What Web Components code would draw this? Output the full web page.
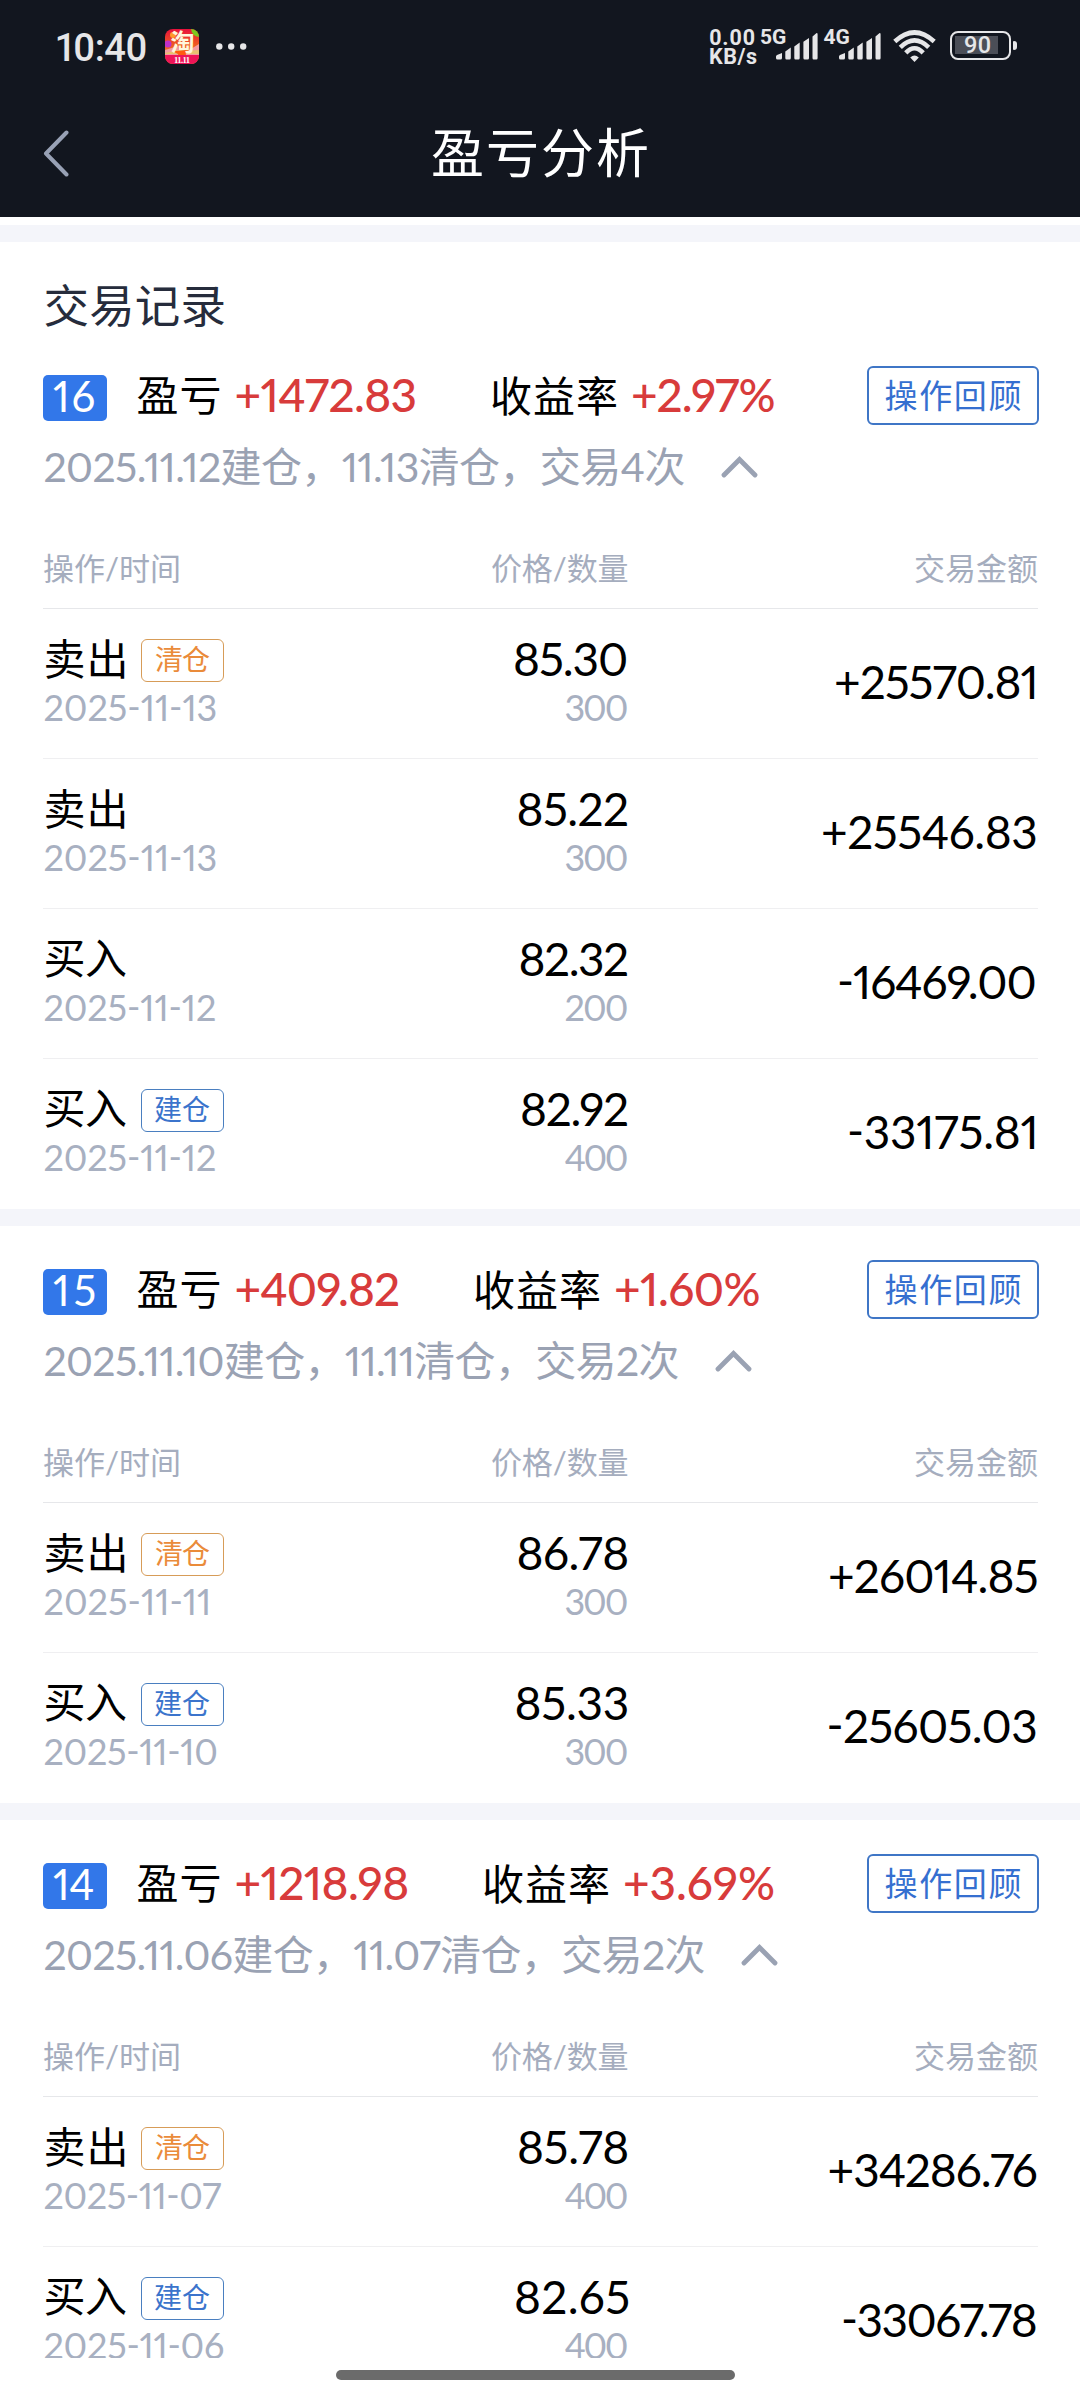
<!DOCTYPE html>
<html lang="zh-CN">
<head>
<meta charset="utf-8">
<title>盈亏分析</title>
<style>
html,body{margin:0;padding:0;background:#fff}
body{width:1080px;height:2400px;overflow:hidden;font-family:Lato,"Noto Sans CJK SC",sans-serif;font-size:46px;color:#000}
</style>
</head>
<body>
<app-screen></app-screen>
<script>
const define=(name,html,setup)=>{
  const t=document.createElement('template');t.innerHTML=html;
  customElements.define(name,class extends HTMLElement{
    connectedCallback(){
      if(this.shadowRoot)return;
      this.attachShadow({mode:'open'}).append(t.content.cloneNode(true));
      if(setup)setup(this,this.shadowRoot);
    }
  });
};
const ctx=document.createElement('canvas').getContext('2d');

/* A line of text whose box is its ink box: w is the ink width. */
define('fit-text',`<style>
:host{display:flow-root;flex:none}
span{display:block;width:max-content;white-space:nowrap;line-height:1;font-feature-settings:"pnum","lnum","case";font-kerning:normal}
</style><span></span>`,(el,root)=>{
  const s=root.querySelector('span'),txt=el.getAttribute('t'),w=+el.getAttribute('w');
  s.textContent=txt;
  const cs=getComputedStyle(el);
  ctx.font=`${cs.fontWeight} ${cs.fontSize} ${cs.fontFamily}`;
  const chars=[...txt],a=ctx.measureText(chars[0]),z=ctx.measureText(chars[chars.length-1]),m=ctx.measureText(txt);
  const left=-a.actualBoundingBoxLeft,right=z.width-z.actualBoundingBoxRight;
  const adv=s.getBoundingClientRect().width;
  s.style.letterSpacing=(w+left+right-adv)/(chars.length-1)+'px';
  s.style.marginLeft=-left+'px';
  const base=parseFloat(cs.fontSize)/2+(m.fontBoundingBoxAscent-m.fontBoundingBoxDescent)/2;
  s.style.marginTop=m.actualBoundingBoxAscent-base+'px';
  el.style.width=w+'px';
  el.style.height=m.actualBoundingBoxAscent+m.actualBoundingBoxDescent+'px';
});

define('signal-bars',`<style>:host{display:block;flex:none;width:42px;height:27px}svg{display:block}</style>
<svg width="42" height="27" viewBox="0 0 42 27" fill="#e6e6e8"><path d="M0 23.5Q0 22.5 1 22L6 20V25Q6 26.500 4.500 26.500H1.500Q0 26.500 0 25ZM9.300 18.500L14.800 14.500V25Q14.800 26.500 13.500 26.500H10.500Q9.300 26.500 9.300 25ZM18.300 13.500L23.700 9.500V25Q23.700 26.500 22.500 26.500H19.500Q18.300 26.500 18.300 25ZM27.400 8.800L33 5V25Q33 26.500 31.700 26.500H28.700Q27.400 26.500 27.400 25ZM36.500 3.600L40.300 .2Q41.600 -.3 41.600 1.500V25Q41.600 26.500 40.400 26.500H37.700Q36.500 26.500 36.500 25Z"/></svg>`);

define('status-bar',`<style>
:host{display:flex;height:92px;align-items:flex-start;color:#e6e6e8;font-family:Roboto,"Noto Sans CJK SC",sans-serif;font-weight:700}
svg{display:block;flex:none}
.time{margin:33px 0 0 59px;font-size:38px;font-weight:500}
.app{margin:29px 0 0 19px;overflow:visible}
.dots{margin:42px 0 0 16px}
.net{margin:29.500px 0 0 auto;display:grid;row-gap:3px;font-size:21.500px}
.g{margin-top:29.500px;font-size:21px}
.g5{margin-left:4px}.g4{margin-left:6px}
signal-bars{margin:33px 0 0 -10.500px}
.wifi{margin:30px 0 0 12px}
.bat{box-sizing:border-box;width:61px;height:29px;border:2.500px solid #e6e6e8;border-radius:8px;margin:31px 0 0 14px;padding:3px;display:flex}
.fill{width:43px;height:18px;background:#4b4e57;display:flex;align-items:center;padding-left:10px;box-sizing:border-box;font-size:23.500px;font-weight:500}
.nub{width:4px;height:9px;border-radius:1px 3px 3px 1px;background:#e6e6e8;margin:41px 63px 0 2px}
</style>
<fit-text class="time" t="10:40" w="87"></fit-text>
<svg class="app" width="34" height="35" viewBox="0 0 34 35"><defs><linearGradient id="g" x1="0" y1="0" x2="0" y2="1"><stop offset="0" stop-color="#e8103c"/><stop offset=".45" stop-color="#ee5a20"/><stop offset="1" stop-color="#f08a30"/></linearGradient><clipPath id="c"><rect width="34" height="35" rx="8"/></clipPath></defs><g clip-path="url(#c)"><rect width="34" height="35" fill="url(#g)"/><path d="M26 0H34V8Q27 7 26 0Z" fill="#7cc81c"/><circle cx="3" cy="15" r="3.500" fill="#c030c8"/><circle cx="8" cy="6" r="3" fill="#ff9a2a"/><path d="M0 21L13 17V27H0ZM34 15L21 23V27H34Z" fill="#f49aa0"/><path d="M0 24L14 21L20 22L34 21V25H0Z" fill="#e8c070"/><path d="M7 22L27 22L17 27Z" fill="#ff5a10"/><rect y="26" width="34" height="9" fill="#ee1458"/></g><text x="17.500" y="22" text-anchor="middle" font-family="Noto Sans CJK SC" font-weight="700" font-size="24" fill="#fff6dc">淘</text><text x="17" y="33.500" text-anchor="middle" font-family="Liberation Serif" font-weight="700" font-size="8.500" textLength="16" fill="#fff">11.11</text></svg>
<svg class="dots" width="32" height="10" fill="#e6e6e8"><circle cx="4.300" cy="4.500" r="3.200"/><circle cx="16.200" cy="4.500" r="3.200"/><circle cx="28.200" cy="4.500" r="3.200"/></svg>
<div class="net"><fit-text t="0.00" w="45"></fit-text><fit-text t="KB/s" w="47"></fit-text></div>
<fit-text class="g g5" t="5G" w="25"></fit-text><signal-bars></signal-bars>
<fit-text class="g g4" t="4G" w="26"></fit-text><signal-bars></signal-bars>
<svg class="wifi" width="43" height="33" viewBox="0 0 43 33" fill="none" stroke="#e6e6e8" stroke-width="4.600"><path d="M1.800 11.500Q21.500 -6.500 41.200 11.500"/><path d="M7.300 17.300Q21.500 3.500 35.700 17.300"/><path d="M12.800 22.800Q21.500 13.800 30.200 22.800"/><path d="M17.200 27.600Q21.500 23.200 25.800 27.600L21.500 32Z" fill="#e6e6e8" stroke="none"/></svg>
<div class="bat"><div class="fill"><fit-text t="90" w="26"></fit-text></div></div><div class="nub"></div>`);

define('nav-bar',`<style>
:host{display:flex;height:125px;align-items:flex-start;color:#fff}
svg{display:block;margin:38px 0 0 43px}
fit-text{margin:35px 0 0 362px;font-size:53px}
</style><svg width="27" height="48" fill="none" stroke="#98a1b5" stroke-width="4" stroke-linecap="round" stroke-linejoin="round"><path d="M23.500 2.500L3 23.500L23.500 44.500"/></svg><fit-text t="盈亏分析" w="215"></fit-text>`);

/* row: operation | tag | date | ink width | price | w | quantity | w | amount | w */
customElements.define('trade-row',class extends HTMLElement{
  connectedCallback(){
    if(this.shadowRoot)return;
    const [op,tag,date,dw,price,pw,qty,qw,amt,aw]=this.getAttribute('row').split('|');
    this.attachShadow({mode:'open'}).innerHTML=`<style>
:host{box-sizing:border-box;height:150px;border-bottom:1px solid #efeff1;display:grid;grid-template-columns:292px 292.500px 1fr}
:host(:last-of-type){border-bottom-color:transparent}
.cell{display:flex;flex-direction:column}
.mid,.end{align-items:flex-end}
.op{height:43px;margin-top:30px;display:flex;align-items:flex-start;justify-content:space-between;width:181px;padding-left:2.500px;box-sizing:border-box}
.op fit-text{font-size:42px}
.sub{font-size:36px;color:#a8b0c1;margin-top:13px}
.left .sub{margin-left:1.500px}
.mid .price{height:34px;margin-top:34px}
.mid .sub{margin-top:18.500px}
.end{justify-content:flex-end;padding:0 2px 58.500px 0}
.tag{box-sizing:border-box;display:flex;justify-content:center;width:83px;height:43px;padding-top:5px;border:1.500px solid #d79c58;border-radius:6px;color:#ea8b3a}
.tag fit-text{font-size:28px}
.tag.b{border-color:#4a7fc0;color:#3b74cc}
</style>
<div class="cell left"><div class="op"><fit-text t="${op}" w="${op==='卖出'?79:80.500}"></fit-text>${tag?`<div class="tag ${tag==='建仓'?'b':''}"><fit-text t="${tag}" w="55"></fit-text></div>`:''}</div><fit-text class="sub" t="${date}" w="${dw}"></fit-text></div>
<div class="cell mid"><fit-text class="price" t="${price}" w="${pw}"></fit-text><fit-text class="sub" t="${qty}" w="${qw}"></fit-text></div>
<div class="cell end"><fit-text t="${amt}" w="${aw}"></fit-text></div>`;
  }
});

/* head: number | ink width | profit | w | rate | w | summary | w */
customElements.define('profit-group',class extends HTMLElement{
  connectedCallback(){
    if(this.shadowRoot)return;
    const [no,nw,pl,plw,rate,rw,sub,sw]=this.getAttribute('head').split('|');
    this.attachShadow({mode:'open'}).innerHTML=`<style>
:host{display:block;border-top:17px solid #f4f5fa;padding:0 42px 0 43px}
.head{display:flex;height:59px;margin-top:34px;align-items:flex-start}
.no{box-sizing:border-box;width:64px;height:46px;padding-bottom:3px;margin:9px 30.500px 0 0;border-radius:5px;background:#3277e9;color:#fff;display:flex;align-items:center;justify-content:center;font-size:42px}
.lab{font-size:42px;margin-top:11px}
.rate{margin-top:8.500px}
.val{color:#d83b3b;font-weight:500;margin:13px 76.500px 0 17px}
.lab,.val{flex:none}
.btn{box-sizing:border-box;width:172px;height:59px;margin:0 -1px 0 auto;border:2px solid #3f76c6;border-radius:6px;color:#356fd0;font-size:33px;display:flex;align-items:center;justify-content:center}
.sub{display:flex;height:108.500px;margin:20.500px 0 0 1.500px;color:#9aa2b3;font-size:41px;align-items:flex-start}
.sub svg{margin:10px 0 0 36px}
.cols{box-sizing:border-box;height:55px;border-bottom:1px solid #e6e7ea;display:grid;grid-template-columns:292px 292.500px 1fr;color:#a5adbe;font-size:31px}
.cols fit-text{margin-top:-1px}
.cols fit-text:first-child{margin-left:1px}
.cols fit-text:not(:first-child){justify-self:end}
</style><slot name="title"></slot>
<div class="head"><div class="no"><fit-text t="${no}" w="${nw}"></fit-text></div>
<fit-text class="lab" t="盈亏" w="82"></fit-text><fit-text class="val" t="${pl}" w="${plw}"></fit-text>
<fit-text class="lab rate" t="收益率" w="124"></fit-text><fit-text class="val" t="${rate}" w="${rw}"></fit-text>
<div class="btn"><fit-text t="操作回顾" w="135"></fit-text></div></div>
<div class="sub"><fit-text t="${sub}" w="${sw}"></fit-text><svg width="38" height="22" fill="none" stroke="#9aa2b3" stroke-width="4.800" stroke-linecap="round"><path d="M3 19L18.500 3.500L34 19"/></svg></div>
<div class="cols"><fit-text t="操作/时间" w="135"></fit-text><fit-text t="价格/数量" w="135.500"></fit-text><fit-text t="交易金额" w="123"></fit-text></div>
<slot></slot>`;
  }
});

define('section-title',`<style>:host{display:block;height:49px;padding:41px 0 0 2.500px;color:#262c3c;font-size:45.500px}</style><fit-text t="交易记录" w="179"></fit-text>`);

define('app-screen',`<style>
:host{display:flex;flex-direction:column;width:1080px;height:2400px;background:#fff}
.dark{background:#12161f;height:217px;flex:none}
main{height:2133px;padding-top:8px;overflow:hidden;flex:none}
.home{width:399px;height:10px;border-radius:5px;background:#6b6b6b;margin:12px auto 0 336px}
</style>
<div class="dark"><status-bar></status-bar><nav-bar></nav-bar></div>
<main>
<profit-group head="16|38|+1472.83|179|+2.97%|141.5|2025.11.12建仓，11.13清仓，交易4次|640">
<section-title slot="title"></section-title>
<trade-row row="卖出|清仓|2025-11-13|171|85.30|112.5|300|62|+25570.81|200"></trade-row>
<trade-row row="卖出||2025-11-13|171|85.22|109|300|62|+25546.83|213"></trade-row>
<trade-row row="买入||2025-11-12|170|82.32|107|200|62|-16469.00|197"></trade-row>
<trade-row row="买入|建仓|2025-11-12|170|82.92|105.5|400|63|-33175.81|187"></trade-row>
</profit-group>
<profit-group head="15|38|+409.82|162|+1.60%|143.5|2025.11.10建仓，11.11清仓，交易2次|634">
<trade-row row="卖出|清仓|2025-11-11|165|86.78|109|300|62|+26014.85|206"></trade-row>
<trade-row row="买入|建仓|2025-11-10|172.5|85.33|111|300|62|-25605.03|207.5"></trade-row>
</profit-group>
<profit-group head="14|38|+1218.98|171|+3.69%|149|2025.11.06建仓，11.07清仓，交易2次|660">
<trade-row row="卖出|清仓|2025-11-07|176|85.78|108.5|400|63|+34286.76|206.5"></trade-row>
<trade-row row="买入|建仓|2025-11-06|179|82.65|111.5|400|63|-33067.78|193"></trade-row>
</profit-group>
</main>
<div class="home"></div>`);
</script>
</body>
</html>
